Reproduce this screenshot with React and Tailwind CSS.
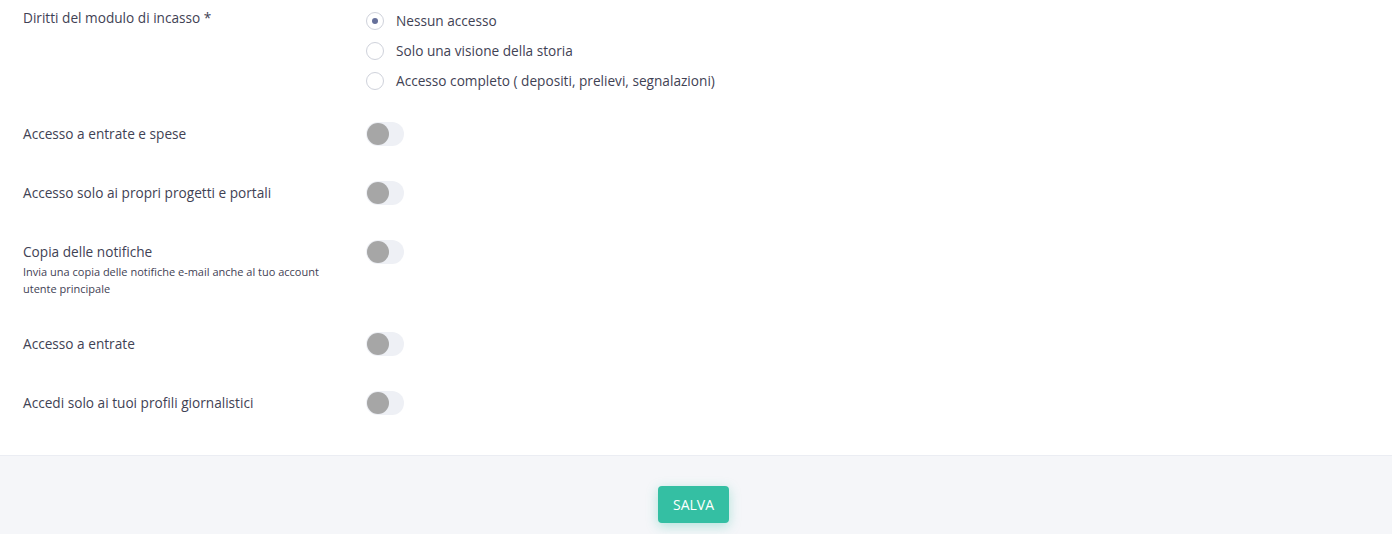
import React from "react";

function Toggle() {
  return (
    <div className="w-[38px] h-[24px] rounded-full bg-[#eef0f5] flex items-center pl-[1px] shrink-0">
      <div className="w-[22px] h-[22px] rounded-full bg-[#a6a6a6]" />
    </div>
  );
}

function Radio({ checked, label }) {
  return (
    <div className="h-[30px] flex items-center">
      <div className="w-[18px] h-[18px] rounded-full border border-[#cfd2db] bg-white flex items-center justify-center shrink-0">
        {checked && <div className="w-[6px] h-[6px] rounded-full bg-[#66709a]" />}
      </div>
      <span className="ml-[12px] text-[13.65px] leading-[20px] text-[#3f4254]">{label}</span>
    </div>
  );
}

function ToggleRow({ title, sub }) {
  return (
    <div className="flex">
      <div className="w-[343px] shrink-0 pt-[1px]">
        <div className="text-[13.65px] leading-[22px] text-[#3f4254]">{title}</div>
        {sub && (
          <div className="text-[11px] leading-[17px] text-[#3f4254] max-w-[310px]">{sub}</div>
        )}
      </div>
      <Toggle />
    </div>
  );
}

export default function App() {
  return (
    <div
      className="w-[1392px] h-[534px] overflow-hidden bg-white"
      style={{ fontFamily: '"Open Sans", "Liberation Sans", sans-serif' }}
    >
      <div className="pl-[23px] pt-[6px] pb-[40px] border-b border-[#ebedf3]">
        <div className="flex">
          <div className="w-[343px] shrink-0 pt-[2px] text-[13.65px] leading-[20px] text-[#3f4254]">
            Diritti del modulo di incasso *
          </div>
          <div className="flex flex-col">
            <Radio checked label="Nessun accesso" />
            <Radio label="Solo una visione della storia" />
            <Radio label="Accesso completo ( depositi, prelievi, segnalazioni)" />
          </div>
        </div>
        <div className="mt-[26px] flex flex-col gap-[35px]">
          <ToggleRow title="Accesso a entrate e spese" />
          <ToggleRow title="Accesso solo ai propri progetti e portali" />
          <ToggleRow
            title="Copia delle notifiche"
            sub="Invia una copia delle notifiche e-mail anche al tuo account utente principale"
          />
          <ToggleRow title="Accesso a entrate" />
          <ToggleRow title="Accedi solo ai tuoi profili giornalistici" />
        </div>
      </div>
      <div className="bg-[#f5f6f9] pt-[30px] pb-[30px] pr-[5px] flex justify-center">
        <button className="w-[71px] h-[37px] rounded-[4px] bg-[#34bfa3] text-white text-[14px] shadow-[0_3px_12px_rgba(52,191,163,0.35)]">
          SALVA
        </button>
      </div>
    </div>
  );
}
